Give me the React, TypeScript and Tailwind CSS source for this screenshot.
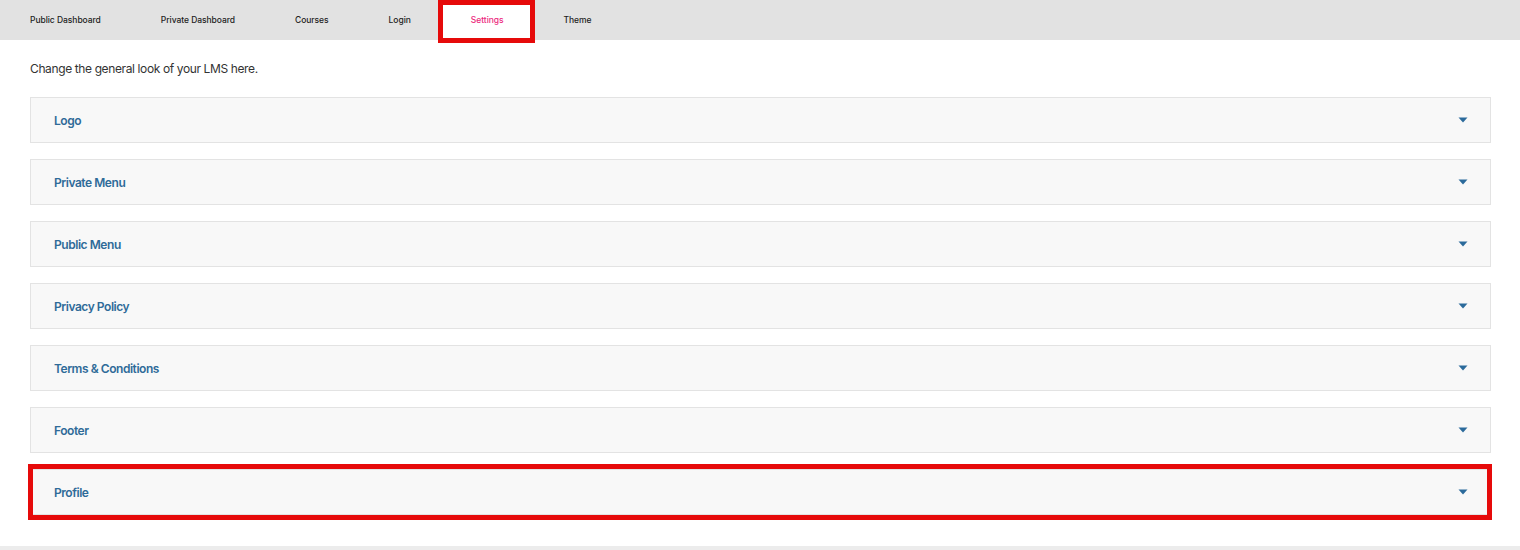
import React from "react";

const tabs = ["Public Dashboard", "Private Dashboard", "Courses", "Login", "Settings", "Theme"];
const sections = ["Logo", "Private Menu", "Public Menu", "Privacy Policy", "Terms & Conditions", "Footer", "Profile"];

function Caret() {
  return (
    <svg width="10" height="6" viewBox="0 0 10 6" className="shrink-0">
      <path d="M0.5 0.5 H9.5 L5 5.5 Z" fill="#2b6a9b" />
    </svg>
  );
}

export default function App() {
  return (
    <div className="w-[1520px] h-[550px] bg-white flex flex-col" style={{ fontFamily: "Inter, 'Noto Sans', sans-serif" }}>
      <nav className="h-[40px] bg-[#e2e2e2] flex items-stretch shrink-0">
        {tabs.map((t) => {
          const active = t === "Settings";
          return (
            <div
              key={t}
              className={`relative flex items-center px-[30px] text-[8.5px] font-medium tracking-[-0.05px] ${active ? "bg-white text-[#ec2a7d]" : "text-[#222]"}`}
            >
              {t}
              {active && (
                <div className="absolute -left-[3px] -right-[1px] top-0 -bottom-[3px] border-[5px] border-[#e60a0a]" />
              )}
            </div>
          );
        })}
      </nav>
      <main className="flex-1 px-[30px] pt-[21px]">
        <p className="text-[12px] text-[#333] leading-[16px] mb-[20px] tracking-[-0.38px]">Change the general look of your LMS here.</p>
        <div className="flex flex-col gap-[16px] w-[1461px]">
          {sections.map((s) => (
            <div key={s} className="relative">
              <div className="h-[46px] bg-[#f8f8f8] border border-[#e3e3e3] flex items-center justify-between pl-[23px] pr-[22px]">
                <span className="text-[12px] font-semibold text-[#2f6b98] tracking-[-0.45px] mt-[2px]">{s}</span>
                <Caret />
              </div>
              {s === "Profile" && (
                <div className="absolute -left-[2px] -right-[1px] -top-[5px] -bottom-[5px] border-[5px] border-[#e60a0a]" />
              )}
            </div>
          ))}
        </div>
      </main>
      <div className="h-[4px] bg-[#ececec] shrink-0" />
    </div>
  );
}
